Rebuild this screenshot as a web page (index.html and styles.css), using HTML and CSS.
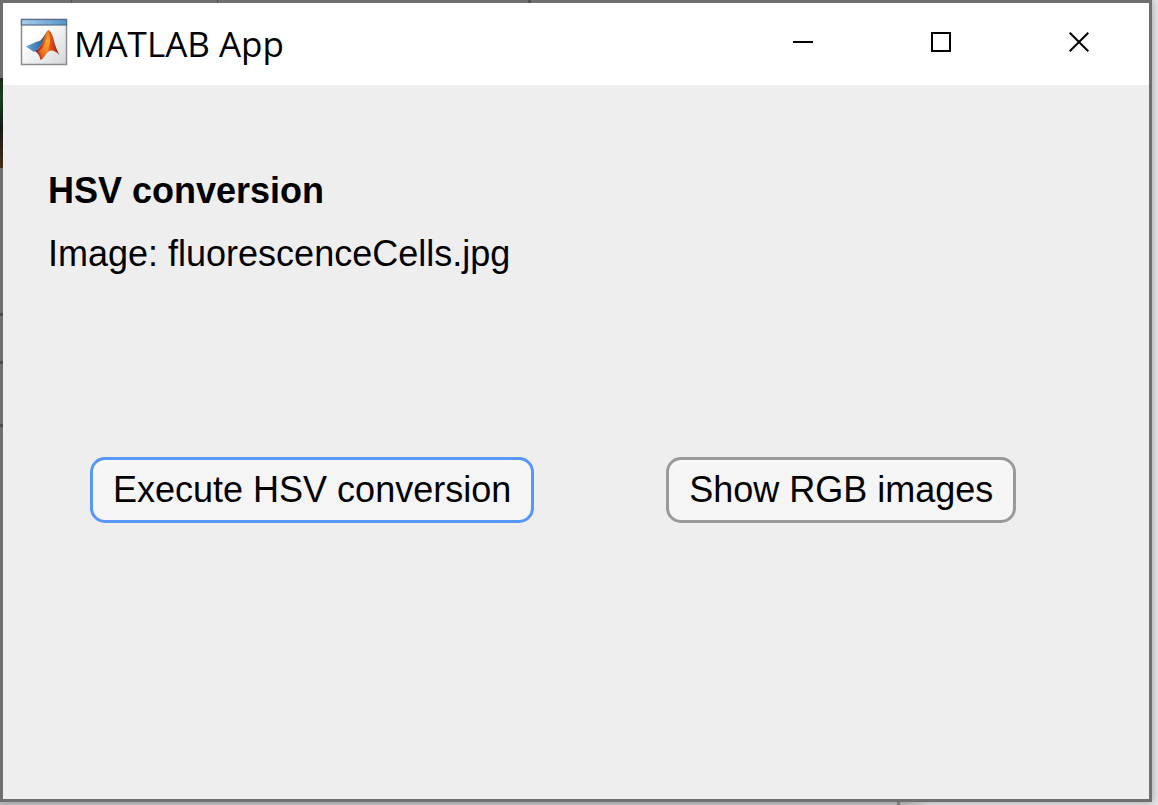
FILE: index.html
```html
<!DOCTYPE html>
<html lang="en">
<head>
<meta charset="utf-8">
<title>MATLAB App</title>
<link rel="stylesheet" href="styles.css">
</head>
<body>
<div class="window">
  <header class="titlebar">
    <svg class="app-icon" viewBox="0 0 48 48" aria-hidden="true">
      <defs>
        <linearGradient id="bar" x1="0" x2="1"><stop offset="0" stop-color="#a9cdea"/><stop offset="1" stop-color="#5595c8"/></linearGradient>
        <linearGradient id="paper" x1="0" y1="0" x2="1" y2="1"><stop offset=".3" stop-color="#ffffff"/><stop offset="1" stop-color="#d5d6d9"/></linearGradient>
        <linearGradient id="blue" x1="0" x2="1"><stop offset="0" stop-color="#62a8dc"/><stop offset=".6" stop-color="#3977ae"/><stop offset="1" stop-color="#263657"/></linearGradient>
        <linearGradient id="flame" x1="0" x2="1"><stop offset="0" stop-color="#62243a"/><stop offset=".25" stop-color="#c83b18"/><stop offset=".48" stop-color="#f18222"/><stop offset=".62" stop-color="#e6511b"/><stop offset="1" stop-color="#8c2116"/></linearGradient>
        <linearGradient id="glow" x1="0" y1="0" x2="0" y2="1"><stop offset="0" stop-color="#f07b20"/><stop offset=".35" stop-color="#ffc52d"/><stop offset="1" stop-color="#ea641c"/></linearGradient>
      </defs>
      <rect x="1.500" y="1.500" width="45" height="45" fill="url(#paper)" stroke="#8b8c90" stroke-width="1.500"/>
      <rect x="1.500" y="1.500" width="45" height="5.500" fill="url(#bar)" stroke="#56718f" stroke-width="1.200"/>
      <path d="M6 28.500L16 24Q19 23 20.500 22.500Q23 20 27.500 12.500Q24 25 18 31L14 34Z" fill="url(#blue)"/>
      <path d="M15 33Q20 30.500 22.500 24Q26 13.500 28.300 12Q31 12.500 33.500 21Q36 31 39.500 37Q34.500 32 31 32.500Q27.500 33 24.500 38.500Q22.500 41 20.500 42Q19.500 36 15 33Z" fill="url(#flame)"/>
      <path d="M28.200 13Q30.500 18 30 25Q29 33 22 41Q21 36 18.500 33.500Q25.500 30 28.200 13Z" fill="url(#glow)" opacity=".65"/>
    </svg>
    <h1 class="title">MATLAB App</h1>
    <div class="controls">
      <button class="control" type="button" aria-label="Minimize"><svg viewBox="0 0 20 20"><path d="M0 10H20" shape-rendering="crispEdges"/></svg></button>
      <button class="control" type="button" aria-label="Maximize"><svg viewBox="0 0 20 20"><path d="M1 1H19V19H1Z"/></svg></button>
      <button class="control" type="button" aria-label="Close"><svg viewBox="0 0 20 20"><path d="M.7 .7L19.300 19.300M19.300 .7L.7 19.300"/></svg></button>
    </div>
  </header>
  <main class="content">
    <h2 class="heading">HSV conversion</h2>
    <p class="filename">Image: fluorescenceCells.jpg</p>
    <div class="actions">
      <button class="button button-focus" type="button">Execute HSV conversion</button>
      <button class="button" type="button">Show RGB images</button>
    </div>
  </main>
</div>
</body>
</html>
```
FILE: styles.css
```css
* {
  box-sizing: border-box;
}

body {
  display: flex;
  min-height: 100vh;
  margin: 0;
  padding: 0 6px 3px 0;
  overflow: hidden;
  background: linear-gradient(90deg, #c4c4c6 0 897px, #8c8c8c 897px 900px, #c4c4c6 900px 906px, #e4e4e6 930px);
  color: #000;
  font-family: "Liberation Sans", Arial, sans-serif;
  font-size: 36px;
}

.window {
  display: flex;
  flex: 1;
  flex-direction: column;
  padding: 3px;
  background:
    linear-gradient(#1c2a17, #17401b 20px, #141b17 50px, #4a2c18) 0 78px / 3px 90px no-repeat,
    linear-gradient(#4c4c4c, #4c4c4c) 0 313px / 3px 3px no-repeat,
    linear-gradient(#4c4c4c, #4c4c4c) 0 361px / 3px 3px no-repeat,
    linear-gradient(#4c4c4c, #4c4c4c) 0 424px / 3px 3px no-repeat,
    linear-gradient(#505050, #505050) 71px 0 / 1px 3px no-repeat,
    linear-gradient(#505050, #505050) 217px 0 / 1px 3px no-repeat,
    linear-gradient(#505050, #505050) 528px 0 / 3px 3px no-repeat,
    #706f70;
  box-shadow: 0 0 8px rgba(0, 0, 0, 0.3);
}

.titlebar {
  display: flex;
  align-items: center;
  height: 82px;
  padding-left: 17px;
  background: #fff;
}

.app-icon {
  width: 48px;
  height: 48px;
  margin: 0 6px 4px 0;
}

.title {
  margin: 0;
  font-family: "Open Sans", "Segoe UI", sans-serif;
  font-size: 35px;
  font-weight: 400;
  line-height: 48px;
}

.controls {
  display: flex;
  align-self: stretch;
  margin-left: auto;
}

.control {
  display: grid;
  place-items: center;
  width: 138px;
  padding: 0 2px 4px 0;
  border: 0;
  background: none;
}

.control svg {
  width: 20px;
  height: 20px;
  fill: none;
  stroke: #000;
  stroke-width: 2;
}

.content {
  flex: 1;
  padding: 85px 45px 0;
  background: #eee;
}

.heading,
.filename {
  margin: 0;
  font-size: 36px;
  line-height: 42px;
}

.filename {
  margin-top: 21px;
}

.actions {
  display: flex;
  gap: 132px;
  margin: 182px 0 0 42px;
}

.button {
  height: 66px;
  padding: 0 20px;
  border: 3px solid #999;
  border-radius: 15px;
  background: #f5f5f5;
  box-shadow: inset 0 3px 0 #f9f9f9;
  color: #000;
  font: inherit;
  white-space: nowrap;
}

.button-focus {
  border-color: #5796fb;
}
```
